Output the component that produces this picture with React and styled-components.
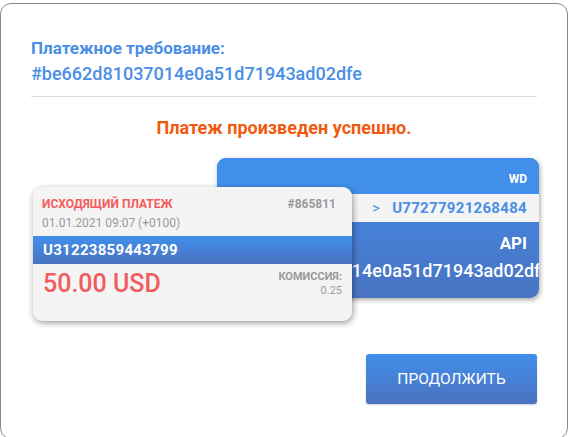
import React from "react";
import styled, { createGlobalStyle } from "styled-components";

const Global = createGlobalStyle`
  html, body { margin: 0; padding: 0; background: #fff; }
  body { font-family: "Roboto", "Noto Sans", sans-serif; }
  * { box-sizing: border-box; }
`;

const Modal = styled.div`
  margin-top: 3px;
  width: 568px;
  height: 436px;
  border: 1px solid #8a8a8a;
  border-radius: 11px;
  padding: 31px 30px 0 30px;
  display: flex;
  flex-direction: column;
`;

const Title = styled.div`
  color: #4a8ee6;
  font-size: 17px;
  font-weight: 700;
  line-height: 26px;
`;

const Hash = styled.div`
  color: #4a8ee6;
  font-size: 18px;
  font-weight: 500;
  line-height: 26px;
`;

const Divider = styled.hr`
  margin: 9px 0 0 0;
  border: 0;
  border-top: 1px solid #dcdcdc;
`;

const Status = styled.div`
  margin-top: 20px;
  text-align: center;
  color: #f2590f;
  font-size: 18px;
  font-weight: 700;
  line-height: 22px;
`;

const Stage = styled.div`
  margin-top: 19px;
  display: grid;
  grid-template-areas: "stack";
`;

const BackCard = styled.div`
  grid-area: stack;
  margin-left: 186px;
  width: 322px;
  height: 140px;
  border-radius: 9px;
  overflow: hidden;
  background: linear-gradient(#418ee9, #4a73c2);
  box-shadow: 1px 2px 5px rgba(0, 0, 0, 0.35);
  display: flex;
  flex-direction: column;
  color: #fff;
`;

const Tag = styled.div`
  text-align: right;
  padding: 14px 12px 0 0;
  font-size: 12px;
  font-weight: 700;
  line-height: 14px;
  height: 36px;
  background: #418fea;
`;

const Receiver = styled.div`
  height: 28px;
  background: #f4f4f4;
  color: #4a8ee6;
  text-align: right;
  padding-right: 12px;
  font-size: 15px;
  font-weight: 700;
  line-height: 28px;
  letter-spacing: 0.3px;
`;

const Arrow = styled.span`
  font-weight: 400;
  margin-right: 12px;
`;

const Api = styled.div`
  text-align: right;
  padding: 9px 12px 0 0;
  font-size: 17px;
  font-weight: 700;
  line-height: 24px;
`;

const BackHash = styled.div`
  padding: 5px 0 0 2px;
  white-space: nowrap;
  font-size: 18px;
  font-weight: 500;
  line-height: 22px;
`;

const FrontCard = styled.div`
  grid-area: stack;
  margin-top: 29px;
  margin-left: 2px;
  width: 319px;
  height: 134px;
  border-radius: 9px;
  overflow: hidden;
  background: #f4f4f4;
  box-shadow: 1px 2px 6px rgba(0, 0, 0, 0.4);
  display: flex;
  flex-direction: column;
  z-index: 1;
`;

const FrontTop = styled.div`
  padding: 9px 16px 0 9px;
  height: 49px;
`;

const Row = styled.div`
  display: flex;
  justify-content: space-between;
  align-items: baseline;
`;

const Kind = styled.span`
  color: #f25c5c;
  font-size: 12px;
  font-weight: 700;
  line-height: 16px;
`;

const Num = styled.span`
  color: #9a9a9a;
  font-size: 12px;
  font-weight: 700;
  line-height: 16px;
`;

const Date = styled.div`
  color: #999;
  font-size: 12px;
  line-height: 14px;
  margin-top: 4px;
`;

const Band = styled.div`
  height: 28px;
  background: linear-gradient(#418fea, #4a72c1);
  color: #fff;
  font-size: 15px;
  font-weight: 700;
  line-height: 28px;
  padding-left: 10px;
  letter-spacing: 0.3px;
`;

const Bottom = styled.div`
  display: flex;
  justify-content: space-between;
  padding: 5px 10px 0 10px;
`;

const Amount = styled.div`
  color: #f25c5c;
  font-size: 25px;
  font-weight: 500;
  line-height: 30px;
`;

const Fee = styled.div`
  text-align: right;
  color: #9a9a9a;
  font-size: 11px;
  line-height: 14px;
  padding-top: 1px;
`;

const FeeLabel = styled.div`
  font-weight: 700;
`;

const Footer = styled.div`
  margin-top: 33px;
  display: flex;
  justify-content: flex-end;
`;

const Button = styled.button`
  width: 171px;
  height: 50px;
  border: 0;
  border-radius: 3px;
  background: linear-gradient(#418fea, #4a72c1);
  box-shadow: 0 1px 2px rgba(0, 0, 0, 0.2);
  color: #fff;
  font-family: inherit;
  font-size: 15.5px;
  font-weight: 400;
  cursor: pointer;
`;

export default function App() {
  return (
    <>
      <Global />
      <Modal>
        <Title>Платежное требование:</Title>
        <Hash>#be662d81037014e0a51d71943ad02dfe</Hash>
        <Divider />
        <Status>Платеж произведен успешно.</Status>
        <Stage>
          <BackCard>
            <Tag>WD</Tag>
            <Receiver>
              <Arrow>&gt;</Arrow>U77277921268484
            </Receiver>
            <Api>API</Api>
            <BackHash>#be662d81037014e0a51d71943ad02dfe</BackHash>
          </BackCard>
          <FrontCard>
            <FrontTop>
              <Row>
                <Kind>ИСХОДЯЩИЙ ПЛАТЕЖ</Kind>
                <Num>#865811</Num>
              </Row>
              <Date>01.01.2021 09:07 (+0100)</Date>
            </FrontTop>
            <Band>U31223859443799</Band>
            <Bottom>
              <Amount>50.00 USD</Amount>
              <Fee>
                <FeeLabel>КОМИССИЯ:</FeeLabel>
                <div>0.25</div>
              </Fee>
            </Bottom>
          </FrontCard>
        </Stage>
        <Footer>
          <Button>ПРОДОЛЖИТЬ</Button>
        </Footer>
      </Modal>
    </>
  );
}
